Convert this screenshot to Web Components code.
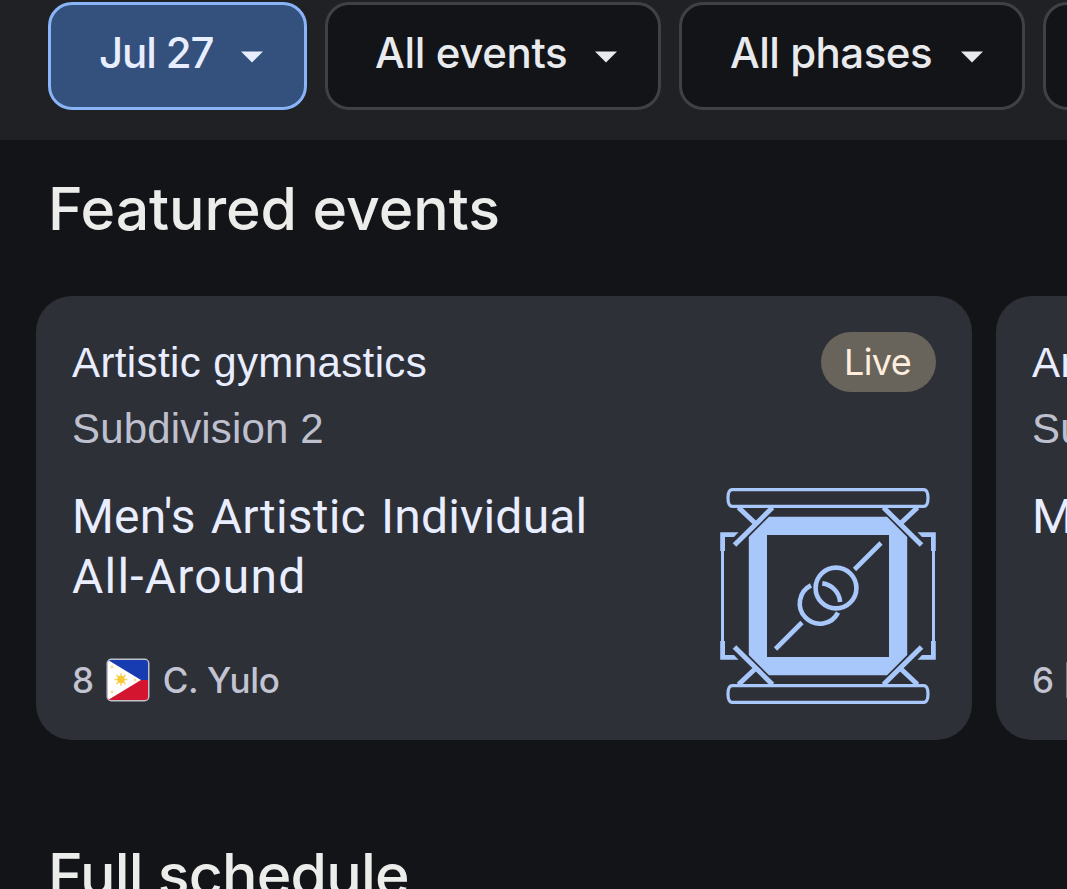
<!DOCTYPE html>
<html lang="en"><head><meta charset="utf-8"><title>Schedule</title>
<style>
html,body{margin:0;height:889px;overflow:hidden;background:#131418}
body{font-family:Roboto,"Liberation Sans",sans-serif}
</style></head><body>
<schedule-page></schedule-page>
<script>
const define=(name,html)=>customElements.define(name,class extends HTMLElement{
  constructor(){super();this.attachShadow({mode:'open'}).innerHTML=html;}
});

define('filter-chip',`<style>
:host{display:flex;box-sizing:border-box;height:108px;flex:none;border:3px solid #3f4144;border-radius:24px;background:#131418;color:#e8eaed;align-items:center;padding:0 41px 6px 47px;justify-content:space-between;font:500 42px/50px Inter,sans-serif;white-space:nowrap}
:host([active]){background:#34507c;border-color:#8ab4f8;color:#e8edff}
svg{display:block;flex:none;margin-top:7px}
</style><span><slot></slot></span><svg width="22" height="12" viewBox="0 0 22 12"><path d="M0 .5H22L11 11.5Z" fill="currentColor"/></svg>`);

define('live-badge',`<style>
:host{display:flex;align-items:center;justify-content:center;box-sizing:border-box;width:115px;height:60px;border-radius:30px;background:#68645c;color:#ffeedd;font:400 36px/58px Inter,sans-serif;letter-spacing:-.6px;padding:0 2px 1px 0}
</style><slot></slot>`);

define('flag-ph',`<style>:host{display:block;width:44px;height:44px}svg{display:block}</style>
<svg width="44" height="44" viewBox="0 0 44 44"><defs><clipPath id="c"><rect x="2" y="2" width="40" height="40" rx="3"/></clipPath></defs>
<rect x=".5" y=".5" width="43" height="43" rx="5" fill="#bfc1cc"/>
<g clip-path="url(#c)"><path d="M0 0H44V22H0Z" fill="#173bb0"/><path d="M0 22H44V44H0Z" fill="#d3152f"/><path d="M2 2L35 22L2 42Z" fill="#fff"/>
<g stroke="#f8d56c" stroke-width="1.500"><path d="M15 15V28M8.500 21.500H21.500M10.400 16.900L19.600 26.100M19.600 16.900L10.400 26.100"/></g><circle cx="15" cy="21.500" r="3.700" fill="#f8c832"/>
<g fill="#f8dc87"><circle cx="6" cy="9" r="1.400"/><circle cx="6" cy="34" r="1.400"/><circle cx="29" cy="22" r="1.400"/></g></g></svg>`);

define('gym-icon',`<style>:host{display:block;width:216px;height:216px;margin-top:1px}svg{display:block}</style>
<svg width="216" height="216" viewBox="720 488 216 216" fill="none" stroke="#a8c7fa">
<defs><g id="q"><path d="M828 489.600H732Q728 490 728 498Q728 506 732 506.400H828" stroke-width="3.200"/>
<path d="M828 516.700H769L748.800 537V596H767V535H828Z" fill="#a8c7fa" stroke="none"/>
<path d="M772.500 507.500L734.500 545" stroke-width="5"/><path d="M738.500 507.500L755.500 523.500" stroke-width="5"/>
<path d="M738.500 532.200H720.200V551H725V537H734Z" fill="#a8c7fa" stroke="none"/><path d="M722.500 550V596" stroke-width="3"/></g></defs>
<use href="#q"/><use href="#q" transform="matrix(-1 0 0 1 1656 0)"/><use href="#q" transform="matrix(1 0 0 -1 0 1192)"/><use href="#q" transform="matrix(-1 0 0 -1 1656 1192)"/>
<g stroke-width="4.600"><path d="M881 543L854.500 569.500M802 622.500L775.500 649"/><circle cx="836" cy="588" r="20.400"/><path d="M811 585.400A20.200 20.200 0 1 0 838 612.600M822.300 583.400A20.200 20.200 0 0 1 840.100 602"/></g></svg>`);

define('event-card',`<style>
:host{display:flex;flex-direction:column;box-sizing:border-box;flex:none;width:936px;height:444px;border-radius:36px;background:#2e3037;padding:36px;white-space:nowrap}
.top{display:flex;justify-content:space-between;height:60px}
.sport{font:400 42px/60px "Liberation Sans",sans-serif;color:#e8edff;letter-spacing:.39px;padding-top:1px}
.phase{font:400 42px/60px "Liberation Sans",sans-serif;color:#bec0cf;padding-top:7px;letter-spacing:.15px}
.body{display:flex;justify-content:space-between;padding-top:28px}
.left{display:flex;flex-direction:column}
.title{height:120px;font:400 48px/60px Roboto,sans-serif;color:#e8edff}
.who{display:flex;align-items:center;margin-top:51px;gap:13px;height:44px;font:500 35px/44px Inter,sans-serif;letter-spacing:-.35px;color:#c2c4d2}
</style>
<div class="top"><div class="sport"><slot name="sport"></slot></div><slot name="badge"></slot></div>
<div class="phase"><slot name="phase"></slot></div>
<div class="body"><div class="left"><div class="title"><slot name="title"></slot></div><div class="who"><slot name="who"></slot></div></div><gym-icon></gym-icon></div>`);

define('section-title',`<style>:host{display:block;font:500 59px/72px Inter,sans-serif;color:#ecedeb;white-space:nowrap}</style><slot></slot>`);

define('schedule-page',`<style>
:host{display:flex;flex-direction:column;width:1067px;height:889px;overflow:hidden;background:#131418}
nav{display:flex;box-sizing:border-box;height:140px;flex:none;gap:18px;padding:2px 0 0 48px;background:#202124;overflow:hidden}
.date{width:259px;letter-spacing:-1.100px;padding-left:48px}
.events{width:336px;letter-spacing:-.35px}
.phases{width:346px;letter-spacing:-.5px;padding:0 39px 6px 48px}
.more{width:300px}
.featured{padding:33px 0 0 48px;height:123px;box-sizing:border-box;margin-bottom:33px;flex:none;letter-spacing:-.1px}
.cards{display:flex;flex:none;gap:24px;padding-left:36px}
.full{padding:99px 0 0 48px;flex:none;letter-spacing:-.8px}
.l1{letter-spacing:.2px;word-spacing:3px}
.l2{letter-spacing:1.200px}
.index{margin-right:-1px}
</style>
<nav><filter-chip active class="date">Jul 27</filter-chip><filter-chip class="events">All events</filter-chip><filter-chip class="phases">All phases</filter-chip><filter-chip class="more"></filter-chip></nav>
<section-title class="featured">Featured events</section-title>
<div class="cards">
<event-card><span slot="sport">Artistic gymnastics</span><live-badge slot="badge">Live</live-badge><span slot="phase">Subdivision 2</span><span slot="title"><span class="l1">Men's Artistic Individual</span><br><span class="l2">All-Around</span></span><span slot="who" class="index">8</span><flag-ph slot="who"></flag-ph><span slot="who">C. Yulo</span></event-card>
<event-card><span slot="sport">Ar</span><span slot="phase">Su</span><span slot="title"><span class="l1">M</span></span><span slot="who" class="index">6</span><flag-ph slot="who"></flag-ph></event-card>
</div>
<section-title class="full">Full schedule</section-title>`);
</script></body></html>
